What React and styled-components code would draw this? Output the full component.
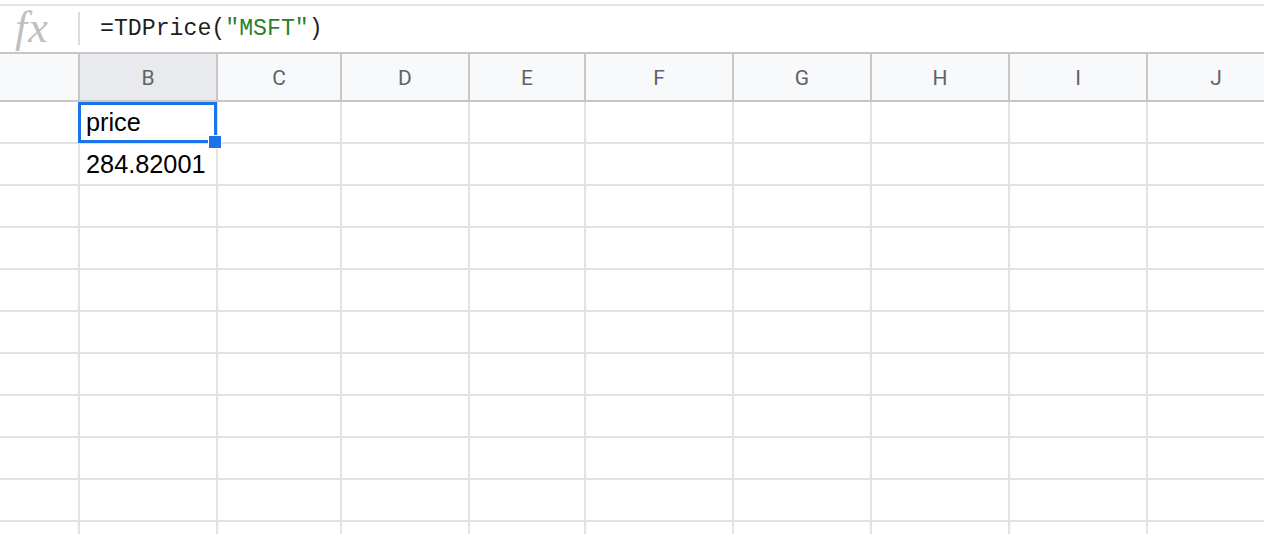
import React from "react";
import styled, { createGlobalStyle } from "styled-components";

const GlobalStyle = createGlobalStyle`
  html, body { margin: 0; padding: 0; background: #ffffff; }
  body { font-family: "Liberation Sans", Arial, sans-serif; }
  * { box-sizing: border-box; }
`;

const COLUMNS = [
  { key: "", width: 80 },
  { key: "B", width: 138 },
  { key: "C", width: 124 },
  { key: "D", width: 128 },
  { key: "E", width: 116 },
  { key: "F", width: 148 },
  { key: "G", width: 138 },
  { key: "H", width: 138 },
  { key: "I", width: 138 },
  { key: "J", width: 138 },
];

const DATA = [["", "price"], ["", "284.82001"]];
const ROW_COUNT = 11;

const Page = styled.div`
  width: 1264px;
  height: 534px;
  overflow: hidden;
  background: #ffffff;
`;

const FormulaBar = styled.div`
  margin-top: 4px;
  height: 50px;
  border-top: 2px solid #e3e3e3;
  border-bottom: 2px solid #c7c7c7;
  display: flex;
  align-items: stretch;
`;

const FxBox = styled.div`
  width: 78px;
  display: flex;
  align-items: center;
  padding-left: 15px;
  padding-bottom: 2px;
  font-family: "Liberation Serif", "Times New Roman", serif;
  font-style: italic;
  font-size: 44px;
  color: #bfbfbf;
  letter-spacing: 1px;
  line-height: 1;
`;

const Divider = styled.div`
  width: 2px;
  margin: 6px 0 7px;
  background: #dadce0;
`;

const FormulaText = styled.div`
  display: flex;
  align-items: center;
  padding-left: 20px;
  font-family: "Liberation Mono", "Courier New", monospace;
  font-size: 23.2px;
  color: #1f1f1f;
  white-space: pre;
`;

const Str = styled.span`
  color: #2a7f2e;
`;

const Grid = styled.div`
  width: 1286px;
`;

const HeaderRow = styled.div`
  display: flex;
  height: 48px;
  border-bottom: 2px solid #c7c7c7;
  background: #f8f9fa;
`;

const HeaderCell = styled.div`
  flex: 0 0 ${(p) => p.$w}px;
  border-right: 2px solid #c7c7c7;
  background: ${(p) => (p.$selected ? "#e8eaed" : "#f8f9fa")};
  display: flex;
  align-items: center;
  justify-content: center;
  font-family: Roboto, "Liberation Sans", sans-serif;
  font-size: 21px;
  color: #5f6368;
  padding-top: 2px;
`;

const Body = styled.div`
  position: relative;
`;

const Row = styled.div`
  display: flex;
  height: 42px;
`;

const Cell = styled.div`
  flex: 0 0 ${(p) => p.$w}px;
  border-right: 2px solid #e2e2e2;
  border-bottom: 2px solid #e2e2e2;
  display: flex;
  align-items: flex-end;
  padding: 0 0 5px 6px;
  font-family: "Liberation Sans", Arial, sans-serif;
  font-size: 25.3px;
  color: #000000;
  white-space: nowrap;
`;

const Selection = styled.div`
  position: absolute;
  top: 0;
  left: 78px;
  width: 139px;
  height: 41px;
  border: 3px solid #1a73e8;
  pointer-events: none;
`;

const Handle = styled.div`
  position: absolute;
  top: 33px;
  left: 208px;
  width: 14px;
  height: 14px;
  background: #1a73e8;
  border: 1px solid #ffffff;
`;

export default function App() {
  return (
    <Page>
      <GlobalStyle />
      <FormulaBar>
        <FxBox>fx</FxBox>
        <Divider />
        <FormulaText>
          =TDPrice(<Str>"MSFT"</Str>)
        </FormulaText>
      </FormulaBar>
      <Grid>
        <HeaderRow>
          {COLUMNS.map((c, i) => (
            <HeaderCell key={i} $w={c.width} $selected={c.key === "B"}>
              {c.key}
            </HeaderCell>
          ))}
        </HeaderRow>
        <Body>
          {Array.from({ length: ROW_COUNT }).map((_, r) => (
            <Row key={r}>
              {COLUMNS.map((c, i) => (
                <Cell key={i} $w={c.width}>
                  {DATA[r] && DATA[r][i] ? DATA[r][i] : ""}
                </Cell>
              ))}
            </Row>
          ))}
          <Selection />
          <Handle />
        </Body>
      </Grid>
    </Page>
  );
}
